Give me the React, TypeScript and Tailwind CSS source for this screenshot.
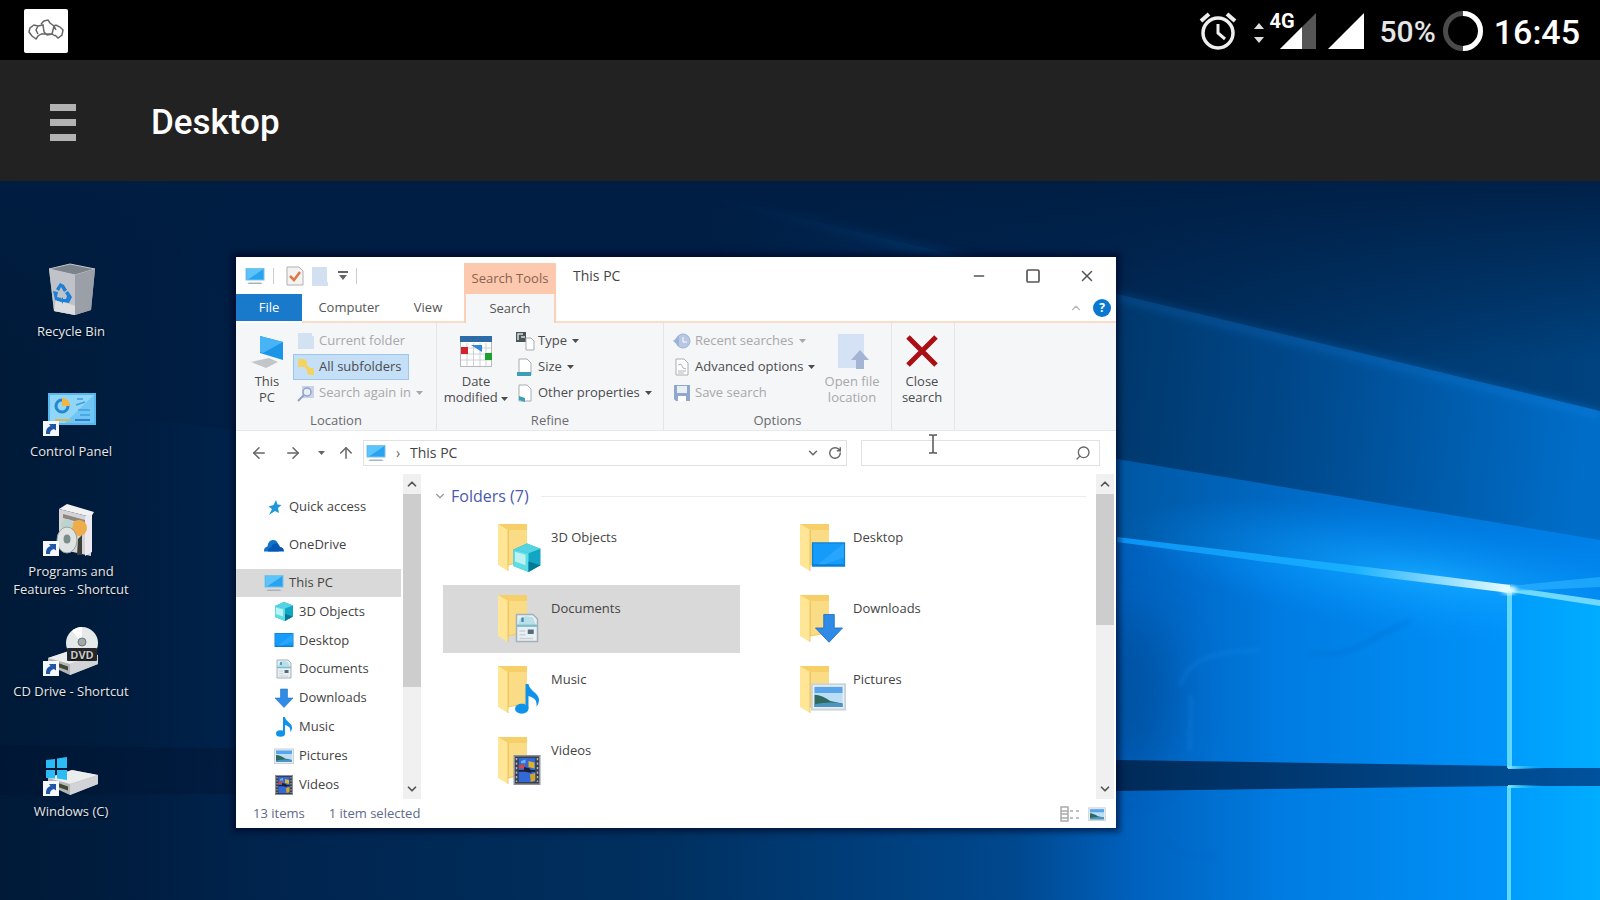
import { ArrowLeft, ArrowRight, ArrowUp, ChevronDown, ChevronUp, Minus, RotateCw, Search, Square, X } from 'lucide-react';
import { useState } from 'react';
import type { ReactNode } from 'react';

type IconName = 'pc' | 'cube' | 'desktop' | 'documents' | 'downloads' | 'music' | 'pictures' | 'videos' | 'pin' | 'cloud';

const places: { name: string; icon: IconName }[] = [
  { name: '3D Objects', icon: 'cube' },
  { name: 'Desktop', icon: 'desktop' },
  { name: 'Documents', icon: 'documents' },
  { name: 'Downloads', icon: 'downloads' },
  { name: 'Music', icon: 'music' },
  { name: 'Pictures', icon: 'pictures' },
  { name: 'Videos', icon: 'videos' },
];

const roots: { name: string; icon: IconName }[] = [
  { name: 'Quick access', icon: 'pin' },
  { name: 'OneDrive', icon: 'cloud' },
  { name: 'This PC', icon: 'pc' },
];

/* Shapes are drawn on a 20x20 grid so they work in the tree and on top of folders */
function Glyph({ name }: { name: IconName }) {
  switch (name) {
    case 'pc':
      return (
        <g>
          <rect x="0.5" y="2" width="19" height="12.5" fill="#7cc3e8" />
          <rect x="1.5" y="3" width="17" height="10.5" fill="#27a3f0" />
          <path d="M1.5 3h17L3 13.5H1.5z" fill="#5cc4fb" />
          <path d="M4 16.5h12l1.500 1.500h-15z" fill="#a9b4bb" />
        </g>
      );
    case 'cube':
      return (
        <g>
          <path d="M1 5l9-4 9 3.500v11L11 20 1 16z" fill="#12a5c4" />
          <path d="M1 5l9-4 9 3.500-8 3z" fill="#54d3e3" />
          <path d="M1 5l10 2.500V20L1 16z" fill="#5fdde6" />
          <path d="M2 6.500l7 2v7L2 13z" fill="#bdf2f2" />
          <path d="M11 13l8 2.500L11 20z" fill="#067a94" />
        </g>
      );
    case 'desktop':
      return (
        <g>
          <rect x="0.5" y="3" width="19" height="14" fill="#0b7fd4" />
          <rect x="1.200" y="3.700" width="17.600" height="11.800" fill="#159bfa" />
          <path d="M18.800 3.700v8L8 15.500H4z" fill="#35adff" opacity=".6" />
        </g>
      );
    case 'documents':
      return (
        <g>
          <path d="M3 1h11l3 3v15H3z" fill="#e9f0f3" stroke="#a3b1b9" />
          <path d="M4 8l1-4 4-2 5 1 2 5z" fill="#b9dfe9" />
          <path d="M3 8.500h14" stroke="#7dbccb" strokeWidth="1.500" />
          <path d="M7 3v3" stroke="#2f8ba8" strokeWidth="1.500" />
          <rect x="10.500" y="11" width="4" height="3" fill="#566b7c" />
          <path d="M5 12h4M5 14.500h4M5 17h9" stroke="#c8d2d8" />
        </g>
      );
    case 'downloads':
      return <path d="M6.500 1h7v9h5.500L10 19.500 1 10h5.500z" fill="#2f8be6" stroke="#2273c4" strokeWidth=".6" />;
    case 'music':
      return (
        <g fill="#0f93ea">
          <ellipse cx="6.500" cy="16.500" rx="4.500" ry="3.300" />
          <path d="M9 0h2c.5 4.500 7 6 7 10.500 0 2-.8 3.500-1.700 4.500.5-4-1-5.500-5.300-7v8.500H9z" />
        </g>
      );
    case 'pictures':
      return (
        <g>
          <rect x="0.500" y="3" width="19" height="14.500" fill="#e8eef2" stroke="#c8d2d9" />
          <rect x="2" y="4.500" width="16" height="11.500" fill="#b9def6" />
          <path d="M2 4.500h16v3.500H2z" fill="#5aa5ea" />
          <path d="M2 9c3 0 6 1.500 9 3.500l7 1.500v2H2z" fill="#2f6a5c" />
          <path d="M2 14.500c5-1 10-1.500 16-.5v2H2z" fill="#4c94c4" />
        </g>
      );
    case 'videos':
      return (
        <g>
          <rect x="1.500" y="0.500" width="17" height="19" fill="#39404c" stroke="#8d929b" />
          <path d="M3 2v16M17 2v16" stroke="#b5b9c2" strokeDasharray="1.500 1.500" />
          <rect x="4.500" y="2" width="11" height="16" fill="#3268d8" />
          <path d="M11 4l4 1v4l-4-1z" fill="#e0b42a" />
          <path d="M4.500 7l4-1v3h-4z" fill="#d04848" />
          <path d="M8 8l4 1 1 3-5-1zM4.500 10h11v1.200h-11z" fill="#1c2230" />
          <path d="M12 13l3.500-1v5l-3 1z" fill="#d5a42b" />
          <path d="M6 4l3-1v2.500H6z" fill="#62b8e8" />
        </g>
      );
    case 'pin':
      return <path d="M12 3l1.500 4.500 4 .5-3.500 3 1 5-4-2-6 4 3-6L4.500 9.500l5-1.500z" fill="#1f97da" />;
    case 'cloud':
      return (
        <g>
          <path d="M0 16c0-3 1.500-4 3.500-4.500C4 7 6.500 5 9 5s4 1 5 3.500l1 8H0z" fill="#1173c9" />
          <path d="M4 16.500c0-3 2-4 3.500-4.500C8 9 10.500 8 12.500 8.500 15 9 15.500 10.500 16 12c2.500 0 4 1.500 4 4.500z" fill="#0557b4" />
        </g>
      );
  }
}

function TreeIcon({ name }: { name: IconName }) {
  return (
    <svg viewBox="0 0 20 20" className="w-5 h-5 shrink-0" aria-hidden="true">
      <Glyph name={name} />
    </svg>
  );
}

function FolderIcon({ name }: { name: IconName }) {
  const wide = name === 'desktop' || name === 'pictures';
  return (
    <svg viewBox="0 0 48 52" className="w-12 h-[52px] shrink-0" aria-hidden="true">
      <path d="M1 2h29v38L9 44z" fill="#f6cf68" />
      <path d="M12 8h18v30l-18 4z" fill="#fbdc86" />
      <path d="M1 2l10 6v41L1 43z" fill="#ffe596" />
      <path d="M11 8v41" stroke="#e6be5c" strokeWidth=".8" />
      <svg x={wide ? 12 : 15} y={wide ? 15 : 20} width={wide ? 35 : 30} height={wide ? 35 : 30} viewBox="0 0 20 20">
        <Glyph name={name} />
      </svg>
    </svg>
  );
}

function ShortcutArrow() {
  return (
    <g>
      <rect x="2" y="40" width="16" height="15" fill="#f5f7fa" />
      <path d="M5 53c0-5 1.500-7 4.500-8L8 43h7v6.500L13 48c-3 1-4 2-4 5z" fill="#1f56a8" />
    </g>
  );
}

function Drive() {
  return (
    <g>
      <path d="M7 37l24-8 26 5v9L29 54 7 44z" fill="#b4b5b8" />
      <path d="M7 37l24-8 26 5-28 9z" fill="#eceded" />
      <path d="M29 43l28-9v9L29 54z" fill="#d2d3d6" />
      <path d="M17 42l10 3.500v4L17 46z" fill="#3f4a33" />
    </g>
  );
}

const desktopItems: { label: string; art: ReactNode }[] = [
  {
    label: 'Recycle Bin',
    art: (
      <g>
        <path d="M8 8l5 42 21 4 16-5 4-41-20 5z" fill="#a9adb3" />
        <path d="M8 8l21-5 25 5-20 6z" fill="#7d838b" stroke="#c3c7cc" />
        <path d="M8 8l26 6v40l-21-4z" fill="#bfc3c9" />
        <path d="M34 14l20-6-4 41-16 5z" fill="#9b9fa7" />
        <path d="M15 38l19 7v9l-21-4z" fill="#dcdde0" />
        <path d="M15 28l4-6 4 2 3 5-3 2-3-5-2 4zM12 30l5 1-1 5 4 1v4l-6-2zM27 30l4 6-3 6-6-1v2l-3-4 3-3v2h3l1-3-2-3z" fill="#1d7fd6" />
      </g>
    ),
  },
  {
    label: 'Control Panel',
    art: (
      <g>
        <rect x="7" y="12" width="48" height="32" fill="#58b8ee" />
        <rect x="9" y="14" width="44" height="28" fill="#8fd6f8" />
        <path d="M53 14v28H24z" fill="#6fc6f4" />
        <circle cx="21" cy="25" r="6" fill="none" stroke="#2587cc" strokeWidth="3" />
        <path d="M21 25v-8a8 8 0 0 1 8 8z" fill="#f3b53e" />
        <path d="M36 18h6M35 24l9-3M37 29h12M39 34h10" stroke="#3f9fdc" strokeWidth="1.500" />
        <path d="M14 39h15" stroke="#d9b559" strokeWidth="2" />
        <path d="M34 39h15" stroke="#2f83c6" strokeWidth="2" />
        <ShortcutArrow />
      </g>
    ),
  },
  {
    label: 'Programs and Features - Shortcut',
    art: (
      <g>
        <path d="M18 8l8-5 27 8-3 5z" fill="#f2f2f2" />
        <path d="M18 8l32 8v39l-32-7z" fill="#d5d3d6" />
        <path d="M44 15l7-2v38l-7 4z" fill="#eceaf0" />
        <path d="M22 13l22 6v4l-22-6z" fill="#8d8782" />
        <circle cx="38" cy="27" r="8" fill="#efac4b" />
        <circle cx="26" cy="24" r="6" fill="#bcd4cf" />
        <ellipse cx="26" cy="39" rx="10" ry="13" fill="#dfe3e2" stroke="#9aa09f" />
        <ellipse cx="26" cy="38" rx="3.500" ry="4.500" fill="#7b8d8a" />
        <path d="M37 38l4-4v20h-5z" fill="#3a4039" />
        <ShortcutArrow />
      </g>
    ),
  },
  {
    label: 'CD Drive - Shortcut',
    art: (
      <g>
        <Drive />
        <circle cx="41" cy="22" r="16" fill="#e6e9ea" />
        <path d="M41 22L31 10a16 16 0 0 1 10-4z" fill="#fff" />
        <circle cx="41" cy="21" r="4" fill="#a2a7a8" stroke="#6f7475" />
        <rect x="26" y="27" width="30" height="13" rx="1" fill="#25272a" />
        <text x="41" y="38" textAnchor="middle" fill="#c6c8c9" className="text-[11px] font-bold">DVD</text>
        <ShortcutArrow />
      </g>
    ),
  },
  {
    label: 'Windows (C)',
    art: (
      <g>
        <Drive />
        <path d="M5 19l9-1v9H5zM16 17.500L26 16v11H16zM5 29h9v8.500L5 37zM16 29h10v10l-10-1.500z" fill="#2cbcf5" />
        <ShortcutArrow />
      </g>
    ),
  },
];

function Wallpaper() {
  return (
    <svg className="absolute inset-0 w-full h-full" viewBox="0 0 1600 719" preserveAspectRatio="none" aria-hidden="true">
      <defs>
        <linearGradient id="base" x1="0" x2="1" y1="0" y2="0">
          <stop offset="0" stopColor="#001a38" />
          <stop offset=".15" stopColor="#001f45" />
          <stop offset=".45" stopColor="#001f47" />
          <stop offset=".7" stopColor="#002a58" />
          <stop offset="1" stopColor="#004380" />
        </linearGradient>
        <linearGradient id="topShade" x1="0" x2="0" y1="0" y2="1">
          <stop offset="0" stopColor="#001d42" stopOpacity=".9" />
          <stop offset=".25" stopColor="#001d42" stopOpacity="0" />
        </linearGradient>
        <linearGradient id="beamA" gradientUnits="userSpaceOnUse" x1="700" x2="1600" y1="0" y2="100">
          <stop offset="0" stopColor="#00234c" stopOpacity="0" />
          <stop offset=".45" stopColor="#003567" />
          <stop offset=".7" stopColor="#004a8e" />
          <stop offset="1" stopColor="#006dc8" />
        </linearGradient>
        <linearGradient id="beamLine" gradientUnits="userSpaceOnUse" x1="700" x2="1600" y1="0" y2="0">
          <stop offset="0" stopColor="#0f74cc" stopOpacity="0" />
          <stop offset=".4" stopColor="#0f74cc" stopOpacity=".5" />
          <stop offset="1" stopColor="#0f80e0" />
        </linearGradient>
        <linearGradient id="beamB" gradientUnits="userSpaceOnUse" x1="800" x2="1600" y1="0" y2="0">
          <stop offset="0" stopColor="#003a74" />
          <stop offset=".42" stopColor="#0059a6" />
          <stop offset=".7" stopColor="#0072d4" />
          <stop offset="1" stopColor="#0082ea" />
        </linearGradient>
        <linearGradient id="floor" gradientUnits="userSpaceOnUse" x1="100" x2="1510" y1="0" y2="0">
          <stop offset="0" stopColor="#001d42" stopOpacity="0" />
          <stop offset=".1" stopColor="#00234c" />
          <stop offset=".4" stopColor="#003060" />
          <stop offset=".65" stopColor="#00488e" />
          <stop offset=".73" stopColor="#0060bc" />
          <stop offset=".84" stopColor="#007ce2" />
          <stop offset="1" stopColor="#0093fa" />
        </linearGradient>
        <linearGradient id="ray" gradientUnits="userSpaceOnUse" x1="1117" x2="1510" y1="0" y2="0">
          <stop offset="0" stopColor="#0a93f5" />
          <stop offset=".6" stopColor="#18b0ff" />
          <stop offset="1" stopColor="#e8fcff" />
        </linearGradient>
        <linearGradient id="gap" x1="0" x2="1" y1="0" y2="0">
          <stop offset="0" stopColor="#001330" stopOpacity=".5" />
          <stop offset=".7" stopColor="#002a58" />
          <stop offset="1" stopColor="#00529e" />
        </linearGradient>
        <linearGradient id="edge" x1="0" x2="1" y1="0" y2="0">
          <stop offset="0" stopColor="#7ce6ff" />
          <stop offset="1" stopColor="#00b0ff" stopOpacity="0" />
        </linearGradient>
        <linearGradient id="pane" x1="0" x2="1" y1="0" y2="0">
          <stop offset="0" stopColor="#009cfc" />
          <stop offset="1" stopColor="#00adff" />
        </linearGradient>
        <radialGradient id="glow" gradientUnits="userSpaceOnUse" cx="0" cy="0" r="1" gradientTransform="translate(1430 396) rotate(9) scale(310 62)">
          <stop offset="0" stopColor="#14a8ff" stopOpacity=".9" />
          <stop offset="1" stopColor="#0090ff" stopOpacity="0" />
        </radialGradient>
        <filter id="soft" x="-10%" y="-50%" width="120%" height="200%">
          <feGaussianBlur stdDeviation="5" />
        </filter>
        <filter id="haze" x="-20%" y="-20%" width="140%" height="140%">
          <feGaussianBlur stdDeviation="2" />
        </filter>
        <filter id="cloudy" x="-60%" y="-60%" width="220%" height="220%">
          <feGaussianBlur stdDeviation="24" />
        </filter>
      </defs>
      <rect width="1600" height="719" fill="url(#base)" />
      <rect width="1600" height="719" fill="url(#topShade)" />
      <path d="M700 13L1117 113 1600 230V370H700z" fill="url(#beamA)" />
      <path d="M700 13L1117 116 1600 234" fill="none" stroke="url(#beamLine)" strokeWidth="9" opacity=".45" filter="url(#soft)" />
      <path d="M800 226L1117 278 1600 359V430L800 330z" fill="url(#beamB)" />
      <path d="M0 220L1117 358 1510 408 1600 422V719H0z" fill="url(#floor)" />
      <path d="M1117 278L1600 359V430L1510 408 1117 358z" fill="url(#glow)" />
      <path d="M1117 358L1510 408V500H1117z" fill="url(#glow)" />
      <ellipse cx="1130" cy="510" rx="44" ry="80" fill="#004488" opacity=".45" filter="url(#cloudy)" />
      <g fill="none" stroke="#1a8cea" strokeWidth="4" opacity=".28" filter="url(#haze)">
        <path d="M1180 505c8-26 28-34 80-36M1190 514c4 14-2 34 0 56" />
        <path d="M1310 472c40 8 60-16 100-32" stroke="#0062c0" />
        <path d="M1165 660c20 14 30 18 50 14" stroke="#0062c0" />
      </g>
      <path d="M0 564L1117 579 1510 585H1600V605H1510L1117 610 0 614z" fill="url(#gap)" />
      <path d="M1510 408L1600 420V587H1510z" fill="url(#pane)" />
      <rect x="1510" y="605" width="90" height="114" fill="url(#pane)" />
      <path d="M1117 356L1400 390 1510 404V412L1380 396 1117 361z" fill="url(#ray)" />
      <path d="M1510 406L1600 419V425L1510 411z" fill="#6fd8ff" />
      <path d="M1510 405L1600 396V406L1510 410z" fill="#28b0ff" opacity=".7" />
      <path d="M1507 409h5v178h-5zM1507 605h4v114h-4z" fill="#62d8f8" />
      <rect x="1508" y="585" width="36" height="3" fill="url(#edge)" />
      <rect x="1508" y="604" width="36" height="3" fill="url(#edge)" />
      <ellipse cx="1509" cy="409" rx="8" ry="4" fill="#e4ffff" filter="url(#haze)" />
    </svg>
  );
}

function StatusBar() {
  return (
    <div className="h-[60px] shrink-0 bg-black pt-0.5 pl-6 pr-5 flex items-center justify-between text-white">
      <svg viewBox="0 0 44 44" className="w-11 h-11" aria-label="Remote session">
        <rect width="44" height="44" rx="2" fill="#fff" />
        <g fill="none" stroke="#666" strokeWidth="1.500">
          <path d="M14 17l-4-1-4 3-1 4 3 4 4 3 2-3 3-2M14 17l-2 4 2 4M30 17l2-1 4 2 3 3-1 5-4 3-3-3" />
          <path d="M14 17l5-1 1 7 3 3 5-1 2-8-4-3-2-3-4 1-3 3M17 25h11l3 2M30 17l2 4" />
        </g>
      </svg>
      <div className="flex items-center">
        <svg viewBox="0 0 38 40" className="w-[38px] h-10 mr-[17px]" fill="none" stroke="#eee" aria-label="Alarm set">
          <circle cx="19" cy="22" r="15" strokeWidth="3.500" />
          <path d="M19 13v9l7 6" strokeWidth="3" />
          <path d="M2 10l8-7M36 10l-8-7" strokeWidth="4" />
        </svg>
        <svg viewBox="0 0 10 20" className="w-2.5 h-5 mr-4 mt-1" fill="#ddd" aria-hidden="true">
          <path d="M0 6l5-6 5 6zM0 14h10l-5 6z" />
        </svg>
        <div className="relative mr-3">
          <svg viewBox="0 0 36 36" className="w-9 h-9" aria-label="Signal">
            <path d="M36 0v36H0z" fill="#555" />
            <path d="M22 14v22H0z" fill="#fff" />
          </svg>
          <span className="absolute -left-2.5 -top-1 text-[20px] leading-6 font-bold">4G</span>
        </div>
        <svg viewBox="0 0 36 36" className="w-9 h-9 mr-4" aria-label="Signal">
          <path d="M36 0v36H0z" fill="#fff" />
        </svg>
        <span className="pt-0.5 text-[30px] leading-9 font-medium text-[#e6e6e6] mr-1.5">50%</span>
        <svg viewBox="0 0 42 42" className="w-[42px] h-[42px] mr-2.5" fill="none" strokeWidth="5" aria-label="Battery">
          <circle cx="21" cy="21" r="17.500" stroke="#4a4a4a" />
          <path d="M21 3.500a17.500 17.500 0 0 1 0 35" stroke="#fff" />
        </svg>
        <span className="pt-0.5 text-[34px] leading-9 font-medium">16:45</span>
      </div>
    </div>
  );
}

function SmallButton({ icon, label, menu, disabled, active }: { icon: ReactNode; label: string; menu?: boolean; disabled?: boolean; active?: boolean }) {
  return (
    <button
      disabled={disabled}
      className={`h-[26px] px-1 flex items-center gap-[5px] border whitespace-nowrap ${active ? 'w-[116px] bg-[#c5dff7] border-[#9cc6ee]' : 'border-transparent'} ${disabled ? 'text-[#a8a8ac]' : 'text-[#4c4c50]'}`}
    >
      <svg viewBox="0 0 16 16" className="w-4 h-4 shrink-0 overflow-visible" aria-hidden="true">{icon}</svg>
      {label}
      {menu && <Caret />}
    </button>
  );
}

function Caret() {
  return (
    <svg viewBox="0 0 7 4" className="w-[7px] h-1 inline-block align-middle" fill="currentColor" aria-hidden="true">
      <path d="M0 0h7L3.500 4z" />
    </svg>
  );
}

function BigButton({ icon, children, disabled, className }: { icon: ReactNode; children: ReactNode; disabled?: boolean; className: string }) {
  return (
    <button disabled={disabled} className={`flex flex-col items-center pt-[5px] leading-4 whitespace-nowrap ${disabled ? 'text-[#a8a8ac]' : 'text-[#4c4c50]'} ${className}`}>
      <svg viewBox="0 0 36 36" className="w-9 h-9 mb-1 shrink-0" aria-hidden="true">{icon}</svg>
      {children}
    </button>
  );
}

function RibbonGroup({ label, className, children }: { label: string; className: string; children: ReactNode }) {
  return (
    <div className={`flex flex-col border-r border-[#e4e5e7] ${className}`}>
      <div className="flex h-[84px] pt-[5px]">{children}</div>
      <div className="text-center leading-[18px] mt-1 text-[#6a6a6e]">{label}</div>
    </div>
  );
}

function Ribbon() {
  const page = <path d="M2 0h8l4 4v12H2z" fill="#fff" stroke="#a8adb3" />;
  return (
    <div className="flex h-[108px] bg-[#f5f6f7] border-b border-[#e8e9ea]">
      <RibbonGroup label="Location" className="w-[201px]">
        <BigButton
          className="w-[42px] ml-2.5 mr-[5px]"
          icon={
            <g>
              <path d="M11 3l23 6v18l-23-7z" fill="#1b95e8" />
              <path d="M11 3l23 6-20 11-3-1z" fill="#48b4f5" />
              <path d="M2 29l18-4 9 4-12 6z" fill="#c3c6c9" />
            </g>
          }
        >
          <span>This</span>
          <span>PC</span>
        </BigButton>
        <div className="flex flex-col items-start">
          <SmallButton label="Current folder" disabled icon={<path d="M0 0h14v3h2v13H0z" fill="#d3e2f3" />} />
          <SmallButton
            label="All subfolders"
            active
            icon={<path d="M0 0h6l3 2v4l3 3h3l1 2v5h-5l-2-2V11L6 8H0z" fill="#f4d365" />}
          />
          <SmallButton
            label="Search again in"
            menu
            disabled
            icon={
              <g>
                <rect x="4" y="1" width="12" height="12" fill="#c9d3e8" />
                <circle cx="9" cy="7" r="4" fill="#e8eef8" stroke="#8fa3c8" strokeWidth="1.500" />
                <path d="M6 10l-6 6" stroke="#8fa3c8" strokeWidth="2" />
              </g>
            }
          />
        </div>
      </RibbonGroup>
      <RibbonGroup label="Refine" className="w-[227px]">
        <BigButton
          className="w-[72px] ml-[3px]"
          icon={
            <g>
              <rect x="2.500" y="3.500" width="31" height="30" fill="#fff" stroke="#b4b9be" />
              <rect x="2" y="3" width="32" height="6" fill="#2d6ca6" />
              <path d="M9 10v23M15.500 10v23M22 10v23M28 10v23M3 15h30M3 21h30M3 27h30" stroke="#cdd2d6" />
              <rect x="3" y="14" width="7" height="7" fill="#d3222e" />
              <path d="M13 12h11v7z" fill="#3288d8" />
              <rect x="27" y="20" width="7" height="7" fill="#19a02d" />
            </g>
          }
        >
          <span>Date</span>
          <span>modified <Caret /></span>
        </BigButton>
        <div className="flex flex-col items-start">
          <SmallButton
            label="Type"
            menu
            icon={
              <g>
                <rect x="-1" y="-1" width="10" height="10" fill="#4a5558" />
                <path d="M6 1H1v6M4 4h4" stroke="#d8dde0" strokeWidth="1.500" fill="none" />
                <path d="M9 5h5l3 3v9H9z" fill="#fff" stroke="#a8adb3" />
              </g>
            }
          />
          <SmallButton label="Size" menu icon={<g>{page}<path d="M0 13h14v4H0z" fill="#3c9fb8" /></g>} />
          <SmallButton label="Other properties" menu icon={<g>{page}<path d="M2 11l6 2v4l-6-2z" fill="#3c9fb8" /></g>} />
        </div>
      </RibbonGroup>
      <RibbonGroup label="Options" className="w-[228px]">
        <div className="flex flex-col items-start w-[152px] ml-[5px]">
          <SmallButton
            label="Recent searches"
            menu
            disabled
            icon={
              <g>
                <circle cx="9" cy="8" r="7" fill="#b8c8e4" stroke="#9fb2d6" />
                <path d="M-1 8l6-5v10z" fill="#9fb2d6" />
                <path d="M9 4v5h4" stroke="#fff" fill="none" />
              </g>
            }
          />
          <SmallButton
            label="Advanced options"
            menu
            icon={<g>{page}<path d="M4 6l3-1 2 4 3 1M4 12h8M4 14h6" stroke="#b0b5ba" fill="none" /></g>}
          />
          <SmallButton
            label="Save search"
            disabled
            icon={
              <g>
                <path d="M0 0h16v16H2l-2-2z" fill="#90a8cc" />
                <rect x="3" y="1" width="10" height="7" fill="#e8eef6" />
                <rect x="4" y="11" width="8" height="5" fill="#fff" />
              </g>
            }
          />
        </div>
        <BigButton
          className="w-[62px]"
          disabled
          icon={
            <g>
              <path d="M4 1h26v34H4z" fill="#d5e2f5" />
              <path d="M17 27l9-10 9 10h-5v9h-8v-9z" fill="#a3b4d4" />
            </g>
          }
        >
          <span>Open file</span>
          <span>location</span>
        </BigButton>
      </RibbonGroup>
      <RibbonGroup label="" className="w-[63px]">
        <BigButton className="w-[60px]" icon={<path d="M4 4l28 28M32 4L4 32" stroke="#a90f14" strokeWidth="5" />}>
          <span>Close</span>
          <span>search</span>
        </BigButton>
      </RibbonGroup>
    </div>
  );
}

function ScrollBar({ thumb }: { thumb: string }) {
  return (
    <div className="w-[18px] shrink-0 bg-[#f0f0f0] flex flex-col items-center text-[#555]">
      <button className="h-5 flex items-center" aria-label="Scroll up"><ChevronUp className="w-3.5 h-3.5" strokeWidth={3} /></button>
      <div className={`w-full bg-[#cdcdcd] ${thumb}`} />
      <button className="mt-auto h-5 flex items-center" aria-label="Scroll down"><ChevronDown className="w-3.5 h-3.5" strokeWidth={3} /></button>
    </div>
  );
}

function Explorer() {
  const [selected, setSelected] = useState('Documents');
  const [query, setQuery] = useState('');

  return (
    <section className="relative w-[55%] min-w-[880px] self-start bg-white text-[13px] text-[#444] shadow-[0_0_6px_4px_rgba(0,0,30,0.55)]">
      {/* Title bar */}
      <header className="flex h-[37px] pr-0.5">
        <div className="w-[228px] flex items-center pl-[9px]">
          <TreeIcon name="pc" />
          <span className="w-px h-4 ml-2 mr-3 bg-[#ccc]" />
          <button aria-label="Properties">
            <svg viewBox="0 0 18 20" className="w-[18px] h-5" aria-hidden="true">
              <path d="M1 1h12l4 4v14H1z" fill="#f3f3f3" stroke="#b0b0b0" />
              <path d="M4 10l4 4 6-8" fill="none" stroke="#dd7844" strokeWidth="2.500" />
            </svg>
          </button>
          <button className="ml-2" aria-label="New folder">
            <svg viewBox="0 0 16 20" className="w-4 h-5" aria-hidden="true">
              <path d="M0 1h15v15h1v4H0z" fill="#d3e0f2" />
            </svg>
          </button>
          <button className="ml-2.5" aria-label="Customize toolbar">
            <svg viewBox="0 0 10 10" className="w-2.5 h-2.5" aria-hidden="true">
              <path d="M0 0h10v2H0zM1 4h8L5 9z" fill="#666" />
            </svg>
          </button>
          <span className="w-px h-4 ml-2 bg-[#ccc]" />
        </div>
        <div className="w-[92px] mt-1.5 bg-[#fcc8ae] text-[#8a6250] flex items-center justify-center">Search Tools</div>
        <h2 className="ml-[17px] flex items-center pb-px text-[14px]">This PC</h2>
        <div className="ml-auto flex text-[#555]">
          <button className="w-[54px] flex items-center justify-center" aria-label="Minimize"><Minus className="w-4 h-4" /></button>
          <button className="w-[54px] flex items-center justify-center" aria-label="Maximize"><Square className="w-4 h-4" strokeWidth={2.500} /></button>
          <button className="w-[54px] flex items-center justify-center" aria-label="Close"><X className="w-[18px] h-[18px]" /></button>
        </div>
      </header>

      {/* Ribbon tabs */}
      <div className="flex h-[29px] text-[#555]">
        <button className="w-[66px] h-[27px] bg-[#1979ca] text-white">File</button>
        <button className="w-[94px] border-b-2 border-[#fbdccb]">Computer</button>
        <button className="w-[64px] border-b-2 border-[#fbdccb]">View</button>
        <div className="w-1 border-b-2 border-[#fbdccb]" />
        <button className="w-[92px] bg-[#f5f6f7] border-x-2 border-[#fbcfb8]">Search</button>
        <div className="flex-1 border-b-2 border-[#fbdccb] flex items-center justify-end pr-[5px] gap-2.5">
          <button aria-label="Collapse ribbon"><ChevronUp className="w-3.5 h-3.5 text-[#b5b5b5]" /></button>
          <button className="w-[18px] h-[18px] rounded-full bg-[#0b78cf] text-white text-[12px] leading-[18px] font-bold" aria-label="Help">?</button>
        </div>
      </div>

      <Ribbon />

      {/* Address row */}
      <div className="flex h-[43px] items-center pl-3.5 pr-4 text-[#666]">
        <button className="mr-4" aria-label="Back"><ArrowLeft className="w-[18px] h-[18px]" /></button>
        <button className="mr-4" aria-label="Forward"><ArrowRight className="w-[18px] h-[18px]" /></button>
        <button className="mr-3 flex" aria-label="Recent locations"><Caret /></button>
        <button className="mr-2" aria-label="Up"><ArrowUp className="w-[18px] h-[18px]" /></button>
        <nav className="flex-1 h-[26px] border border-[#e1e1e3] flex items-center pl-0.5 pr-1" aria-label="Address">
          <TreeIcon name="pc" />
          <span className="w-6 text-center text-[14px]">›</span>
          <button className="text-[14px] text-[#444]">This PC</button>
          <button className="ml-auto mr-2" aria-label="Previous locations"><ChevronDown className="w-3.5 h-3.5" strokeWidth={2.500} /></button>
          <button aria-label="Refresh"><RotateCw className="w-3.5 h-3.5" strokeWidth={2.500} /></button>
        </nav>
        <div className="w-[239px] h-[26px] ml-3.5 border border-[#e1e1e3] flex items-center pr-2">
          <input
            type="text"
            value={query}
            onChange={(e) => setQuery(e.target.value)}
            className="flex-1 min-w-0 h-full px-2 focus:outline-none"
            aria-label="Search This PC"
          />
          <Search className="w-4 h-4 -scale-x-100" />
        </div>
      </div>

      {/* Tree and folder list */}
      <div className="flex h-[325px] pr-0.5">
        <nav className="w-[165px] mr-0.5 flex flex-col pt-[19px]" aria-label="Places">
          <div className="flex flex-col gap-2.5">
            {roots.map((item) => (
              <button
                key={item.name}
                className={`h-7 pl-7 flex items-center gap-[5px] ${item.name === 'This PC' ? 'bg-[#d9d9d9]' : ''}`}
              >
                <TreeIcon name={item.icon} />
                {item.name}
              </button>
            ))}
          </div>
          {places.map((item) => (
            <button key={item.name} onClick={() => setSelected(item.name)} className="flex-1 pl-[38px] flex items-center gap-[5px]">
              <TreeIcon name={item.icon} />
              {item.name}
            </button>
          ))}
        </nav>
        <ScrollBar thumb="h-[193px]" />
        <div className="flex-1 pl-3 pr-2.5">
          <div className="h-10 pt-1 flex items-center gap-1 text-[16px] text-[#4a58b0]">
            <ChevronDown className="w-3.5 h-3.5 text-[#999]" />
            <h3>Folders (7)</h3>
            <span className="flex-1 h-px ml-2 bg-[#ececf0]" />
          </div>
          <div className="grid grid-cols-[297px_297px] gap-x-[5px] gap-y-[3px] pl-2.5">
            {places.map((item) => (
              <button
                key={item.name}
                onClick={() => setSelected(item.name)}
                className={`h-[68px] pl-[54px] pt-2 flex items-start gap-1.5 ${selected === item.name ? 'bg-[#d9d9d9]' : ''}`}
              >
                <FolderIcon name={item.icon} />
                <span className="leading-[18px] mt-1.5">{item.name}</span>
              </button>
            ))}
          </div>
        </div>
        <ScrollBar thumb="h-[131px]" />
      </div>

      {/* Window status */}
      <footer className="h-[29px] pl-[17px] pr-2.5 flex items-center text-[#5d6a88]">
        <span>13 items</span>
        <span className="ml-6">1 item selected</span>
        <button className="ml-auto" aria-label="Details view">
          <svg viewBox="0 0 20 16" className="w-5 h-4" fill="none" stroke="#aaa" aria-hidden="true">
            <path d="M1 1h7v14H1zM1 5h7M1 8h7M1 12h7M10 5h3M16 5h3M10 12h3M16 12h3" strokeWidth="1.500" />
          </svg>
        </button>
        <button className="ml-2" aria-label="Large icons view">
          <svg viewBox="0 2 20 16" className="w-[18px] h-3.5" aria-hidden="true"><Glyph name="pictures" /></svg>
        </button>
      </footer>

      {/* Text cursor over the search box */}
      <svg viewBox="0 0 10 20" className="absolute right-[178px] top-[177px] w-2.5 h-5" fill="none" stroke="#555" strokeWidth="1.500" aria-hidden="true">
        <path d="M1 1h3l1 1 1-1h3M5 2v16M1 19h3l1-1 1 1h3" />
      </svg>
    </section>
  );
}

export default function App() {
  return (
    <div className="min-h-screen flex flex-col font-[Roboto,sans-serif]">
      <StatusBar />
      <header className="h-[121px] shrink-0 bg-[#222] flex items-center pt-1 pl-[50px]">
        <button className="w-[26px] flex flex-col gap-2" aria-label="Menu">
          <span className="w-full h-[7px] bg-[#b2b2b2]" />
          <span className="w-full h-[7px] bg-[#b2b2b2]" />
          <span className="w-full h-[7px] bg-[#b2b2b2]" />
        </button>
        <h1 className="ml-[75px] text-[35px] leading-[44px] font-medium text-white">Desktop</h1>
      </header>
      <main className="relative flex-1 flex pt-[76px] pb-8 bg-[#001c3e] overflow-hidden font-['Open_Sans',sans-serif]">
        <Wallpaper />
        <div className="relative w-[142px] shrink-0 mr-[94px] pt-1 flex flex-col">
          {desktopItems.map((item) => (
            <button key={item.label} className="h-[120px] flex flex-col items-center text-[13px] leading-[18px] text-[#e4e8ee] [text-shadow:0_1px_2px_#000]">
              <svg viewBox="0 0 60 56" className="w-[60px] h-14 mb-[5px] shrink-0" aria-hidden="true">{item.art}</svg>
              <span className="px-2">{item.label}</span>
            </button>
          ))}
        </div>
        <Explorer />
      </main>
    </div>
  );
}
